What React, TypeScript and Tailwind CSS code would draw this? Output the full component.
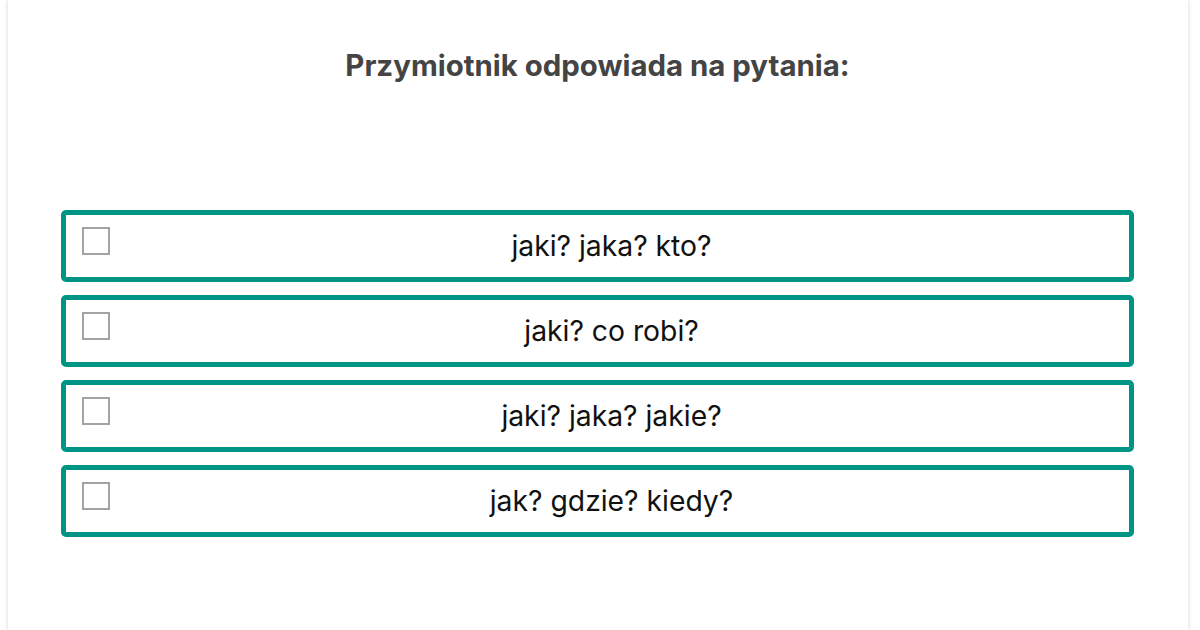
import React from 'react';

const answers = [
  'jaki? jaka? kto?',
  'jaki? co robi?',
  'jaki? jaka? jakie?',
  'jak? gdzie? kiedy?',
];

function AnswerOption({ label }: { label: string }) {
  return (
    <label className="flex h-[72px] cursor-pointer rounded-[5px] border-[5px] border-[#009485] bg-white px-4 pt-3">
      <span className="block h-[28px] w-[28px] shrink-0 border-2 border-[#a3a3a3] bg-white" />
      <span className="flex flex-1 items-center justify-center pb-3 text-[28.3px] leading-none text-[#111]">
        {label}
      </span>
    </label>
  );
}

const App = () => (
  <div className="h-[630px] w-full overflow-hidden bg-white font-['Inter',sans-serif]">
    <div className="ml-2 mr-3 h-full bg-white pl-[53px] pr-[54px] pt-[48px] shadow-[0_0_4px_rgba(0,0,0,0.18)]">
      <h1 className="text-center text-[29.4px] font-bold leading-[36px] text-[#444]">
        Przymiotnik odpowiada na pytania:
      </h1>
      <div className="mt-[126px] flex flex-col gap-[13px]">
        {answers.map((a) => (
          <AnswerOption key={a} label={a} />
        ))}
      </div>
    </div>
  </div>
);

export default App;
